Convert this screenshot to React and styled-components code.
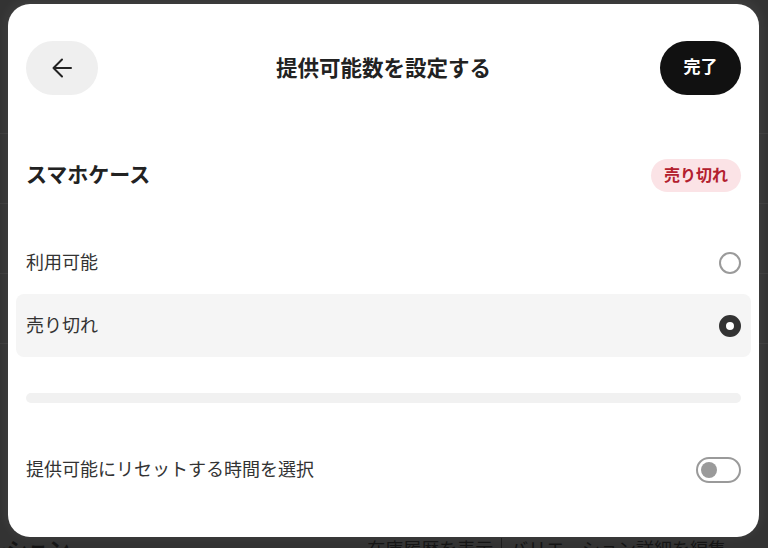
import React, { useState } from "react";
import styled, { createGlobalStyle } from "styled-components";

const GlobalStyle = createGlobalStyle`
  html, body {
    margin: 0;
    padding: 0;
    background: #333333;
  }
  body {
    font-family: "Noto Sans CJK JP", "Noto Sans", sans-serif;
    color: #222;
  }
  * { box-sizing: border-box; }
`;

const BackArrow = () => (
  <svg width="20" height="20" viewBox="0 0 20 20" fill="none">
    <path
      d="M19 10H1.5M10 1.5L1.5 10L10 18.5"
      stroke="#222"
      strokeWidth="2"
      strokeLinecap="round"
      strokeLinejoin="round"
    />
  </svg>
);

const App = () => {
  const [status, setStatus] = useState("soldout");
  const [resetOn, setResetOn] = useState(false);

  const options = [
    { id: "available", label: "利用可能" },
    { id: "soldout", label: "売り切れ" },
  ];

  return (
    <>
      <GlobalStyle />
      <Page>
        <Behind>
          <BehindRow />
          <BehindRow />
          <BehindRow />
          <BehindRow />
          <Footer>
            <FooterTitle>ーション</FooterTitle>
            <FooterLinks>
              <FooterLink>在庫履歴を表示</FooterLink>
              <Sep />
              <FooterLink>バリエーション詳細を編集</FooterLink>
            </FooterLinks>
          </Footer>
        </Behind>

        <Overlay>
          <Modal>
            <Header>
              <BackButton aria-label="戻る">
                <BackArrow />
              </BackButton>
              <Title>提供可能数を設定する</Title>
              <DoneButton>完了</DoneButton>
            </Header>

            <SectionHead>
              <SectionTitle>スマホケース</SectionTitle>
              <Badge>売り切れ</Badge>
            </SectionHead>

            <OptionList>
              {options.map((o) => (
                <OptionRow
                  key={o.id}
                  $selected={status === o.id}
                  onClick={() => setStatus(o.id)}
                >
                  <OptionLabel>{o.label}</OptionLabel>
                  <Radio $checked={status === o.id} />
                </OptionRow>
              ))}
            </OptionList>

            <Divider />

            <ToggleRow onClick={() => setResetOn(!resetOn)}>
              <OptionLabel>提供可能にリセットする時間を選択</OptionLabel>
              <Switch $on={resetOn}>
                <Knob $on={resetOn} />
              </Switch>
            </ToggleRow>
          </Modal>
        </Overlay>
      </Page>
    </>
  );
};

export default App;

const Page = styled.div`
  position: relative;
  width: 768px;
  height: 548px;
  overflow: hidden;
  background: #333333;
`;

const Behind = styled.div`
  height: 100%;
  display: flex;
  flex-direction: column;
  padding-top: 64px;
`;

const BehindRow = styled.div`
  height: 70px;
  border-bottom: 1px solid #3c3c3c;
`;

const Footer = styled.div`
  margin-top: auto;
  margin-bottom: -15px;
  height: 30px;
  display: flex;
  align-items: center;
  justify-content: space-between;
  color: #141414;
`;

const FooterTitle = styled.div`
  margin-left: -14px;
  font-size: 21px;
  font-weight: 700;
`;

const FooterLinks = styled.div`
  display: flex;
  align-items: center;
  gap: 8px;
  margin-right: 42px;
`;

const FooterLink = styled.span`
  font-size: 18px;
  text-decoration: underline;
`;

const Sep = styled.span`
  width: 1px;
  height: 20px;
  background: #1c1c1c;
`;

const Overlay = styled.div`
  position: absolute;
  inset: 0;
  padding: 4px 9px 11px 8px;
  display: flex;
`;

const Modal = styled.div`
  flex: 1;
  background: #ffffff;
  border-radius: 22px;
  padding: 37px 18px 0;
  display: flex;
  flex-direction: column;
  box-shadow: 0 -2px 14px rgba(255, 255, 255, 0.08);
`;

const Header = styled.div`
  display: grid;
  grid-template-columns: 1fr auto 1fr;
  align-items: center;
  height: 54px;
`;

const BackButton = styled.button`
  justify-self: start;
  width: 72px;
  height: 54px;
  border: none;
  border-radius: 27px;
  background: #efefef;
  display: flex;
  align-items: center;
  justify-content: center;
  padding: 0;
  cursor: pointer;
`;

const Title = styled.h1`
  margin: 0;
  padding-bottom: 4px;
  font-size: 21.5px;
  font-weight: 700;
  color: #222;
  white-space: nowrap;
`;

const DoneButton = styled.button`
  justify-self: end;
  width: 81px;
  height: 54px;
  border: none;
  border-radius: 27px;
  background: #111111;
  color: #ffffff;
  font-family: inherit;
  font-size: 17px;
  font-weight: 700;
  padding: 0 0 5px;
  cursor: pointer;
`;

const SectionHead = styled.div`
  margin-top: 64px;
  height: 33px;
  display: flex;
  align-items: center;
  justify-content: space-between;
`;

const SectionTitle = styled.h2`
  margin: 0;
  padding-bottom: 5px;
  font-size: 21px;
  font-weight: 700;
  color: #222;
`;

const Badge = styled.span`
  height: 33px;
  padding: 0 13px 3px;
  border-radius: 17px;
  background: #fbe3e6;
  color: #b3202e;
  font-size: 16px;
  font-weight: 700;
  display: flex;
  align-items: center;
`;

const OptionList = styled.div`
  margin: 39px -10px 0;
  display: flex;
  flex-direction: column;
`;

const OptionRow = styled.div`
  height: 63px;
  padding: 0 10px;
  border-radius: 8px;
  display: flex;
  align-items: center;
  justify-content: space-between;
  background: ${(p) => (p.$selected ? "#f5f5f5" : "transparent")};
  cursor: pointer;
`;

const OptionLabel = styled.span`
  padding-bottom: 4px;
  font-size: 18px;
  color: #333;
`;

const Radio = styled.span`
  width: 22px;
  height: 22px;
  border-radius: 50%;
  border: ${(p) => (p.$checked ? "7.5px solid #333" : "2px solid #9a9a9a")};
  background: #ffffff;
`;

const Divider = styled.div`
  margin-top: 36px;
  height: 10px;
  border-radius: 5px;
  background: #f1f1f1;
`;

const ToggleRow = styled.div`
  margin-top: 54px;
  height: 26px;
  display: flex;
  align-items: center;
  justify-content: space-between;
  cursor: pointer;
`;

const Switch = styled.span`
  width: 45px;
  height: 26px;
  border-radius: 13px;
  border: 2px solid ${(p) => (p.$on ? "#111" : "#9a9a9a")};
  background: ${(p) => (p.$on ? "#111" : "#fff")};
  display: flex;
  align-items: center;
  padding: 0 3px;
  justify-content: ${(p) => (p.$on ? "flex-end" : "flex-start")};
`;

const Knob = styled.span`
  width: 16px;
  height: 16px;
  border-radius: 50%;
  background: ${(p) => (p.$on ? "#fff" : "#9a9a9a")};
`;
